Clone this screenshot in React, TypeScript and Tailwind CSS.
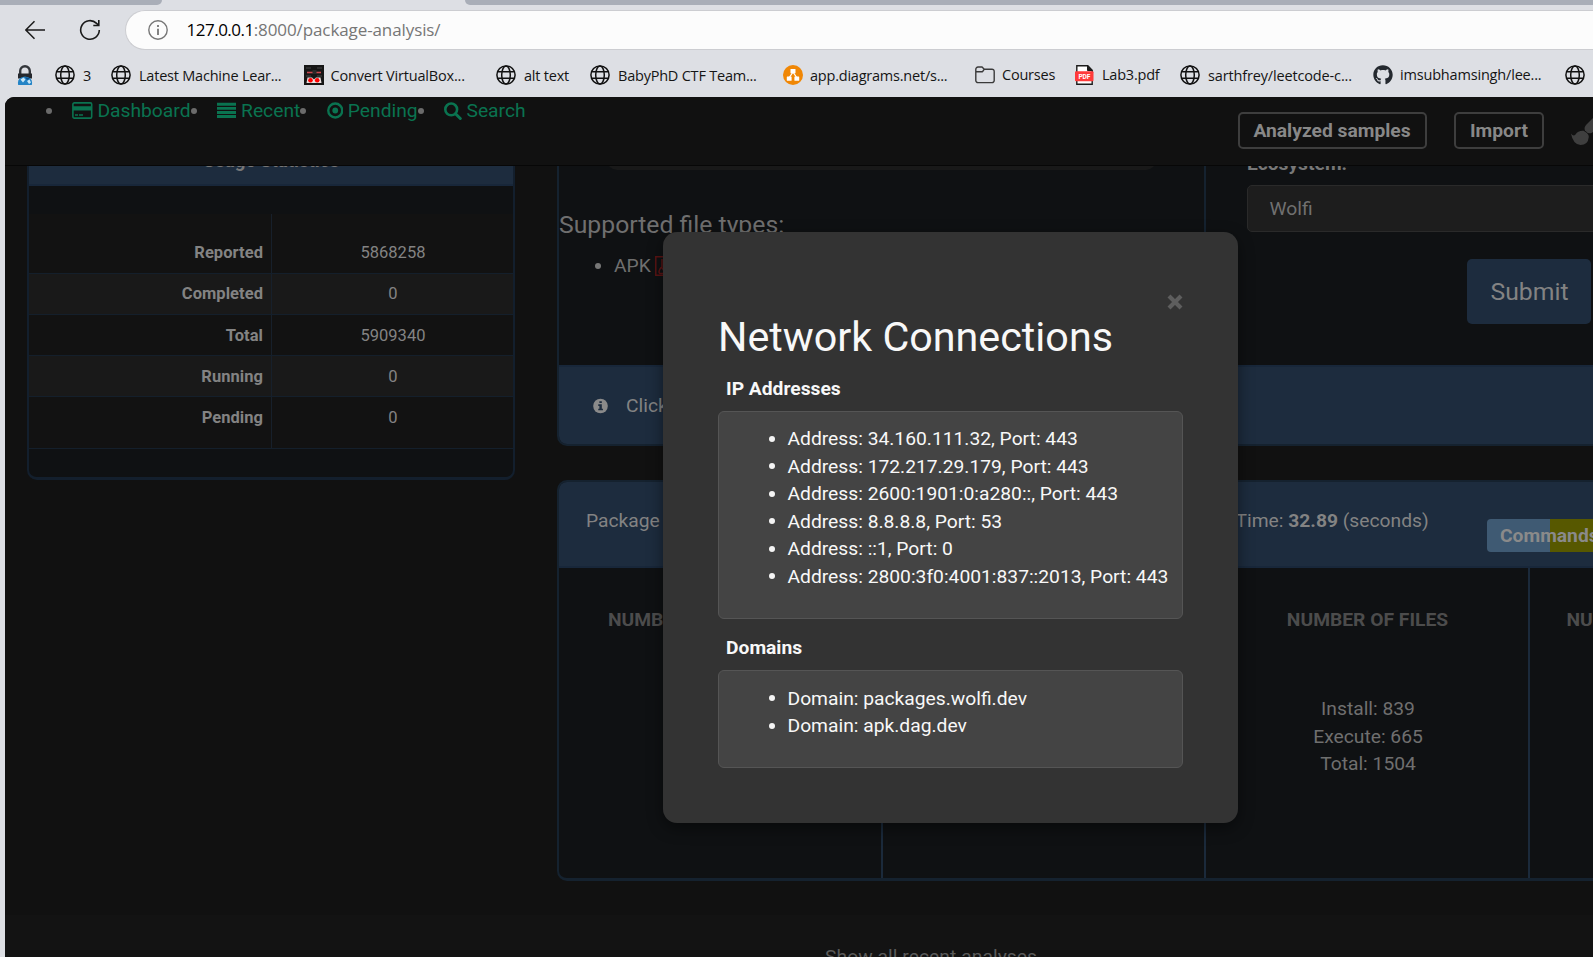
import React from "react";
import { FaGithub } from "react-icons/fa";

function Globe() {
  return (
    <svg width="20" height="20" viewBox="0 0 20 20" fill="none" stroke="#111" strokeWidth="1.5" className="shrink-0">
      <circle cx="10" cy="10" r="9.1" />
      <ellipse cx="10" cy="10" rx="4.3" ry="9.1" />
      <path d="M1.8 6.7H18.2M1.8 13.3H18.2" />
    </svg>
  );
}

function LockGlobe() {
  return (
    <svg width="16" height="20" viewBox="0 0 16 20" className="shrink-0">
      <path d="M3.2 9V6a4.8 4.8 0 0 1 9.6 0v3" fill="none" stroke="#33363b" strokeWidth="2.4" />
      <path d="M1 8.500h14v5H1z" fill="#25282d" />
      <path d="M1.200 20Q-.5 12.500 8 11.500Q16.500 12.500 14.800 20z" fill="#2484c6" />
      <path d="M3.500 14.500l3-2 2 2-2.500 3zM10 16l2.500-1.500 1.500 3-2 1.500z" fill="#c8e6f7" />
      <path d="M8 12l5 1.500-3 1.500z" fill="#0d4f8c" />
    </svg>
  );
}

function RedBox() {
  return (
    <svg width="20" height="20" viewBox="0 0 20 20" className="shrink-0">
      <rect width="20" height="20" fill="#161616" />
      <path d="M2 3h5M13 3h5M2 11h5M13 11h5" stroke="#444" strokeWidth="1" />
      <path d="M3 7.500h14" stroke="#c9474f" strokeWidth="1.600" />
      <rect x="8.500" y="5" width="4" height="4" fill="#2a2a2a" />
      <path d="M3.500 12.500h4.500l2 2 2-2h4.500l1 5.500h-15z" fill="#e8dede" />
      <circle cx="6.500" cy="15.200" r="2.300" fill="#f00" />
      <circle cx="13.200" cy="15.200" r="2.300" fill="#f00" />
    </svg>
  );
}

function Diagrams() {
  return (
    <svg width="20" height="20" viewBox="0 0 20 20" className="shrink-0">
      <circle cx="10" cy="10" r="10" fill="#f08705" />
      <path d="M10 7L6 13M10 7l4 6" stroke="#fff" strokeWidth="1.300" />
      <rect x="7.500" y="4" width="5" height="4.200" rx=".5" fill="#fff" />
      <rect x="3.800" y="11.600" width="4.800" height="4.200" rx=".5" fill="#fff" />
      <rect x="11.400" y="11.600" width="4.800" height="4.200" rx=".5" fill="#fff" />
    </svg>
  );
}

function Folder() {
  return (
    <svg width="20" height="20" viewBox="0 0 20 20" fill="none" stroke="#3a3a3a" strokeWidth="1.400" className="shrink-0">
      <path d="M.8 4.200a2.200 2.200 0 0 1 2.200-2.200h4l2.300 2.200h7.700a2.200 2.200 0 0 1 2.200 2.200v9a2.200 2.200 0 0 1-2.200 2.200H3a2.200 2.200 0 0 1-2.200-2.200zM.8 6.800h5.700q.8 0 1.300-.6l1.500-2" />
    </svg>
  );
}

function Pdf() {
  return (
    <svg width="20" height="20" viewBox="0 0 20 20" className="shrink-0">
      <path d="M1.800 19.200V.8h11l4.400 4.400v14z" fill="#fff" stroke="#1c1c1c" strokeWidth="1.400" />
      <path d="M12.500.8v4.700h4.700" fill="#1c1c1c" stroke="#1c1c1c" />
      <rect y="6.200" width="18.500" height="10" rx="1" fill="#ff3a3a" />
      <text x="9.300" y="13.700" textAnchor="middle" fontSize="6.600" fontWeight="700" fill="#fff" fontFamily="Roboto, sans-serif">PDF</text>
    </svg>
  );
}

const bookmarks: { icon: React.ReactNode; label?: string; w: string; t?: string }[] = [
  { icon: <LockGlobe />, w: "w-[38px]" },
  { icon: <Globe />, label: "3", w: "w-[56px]", t: "pt-px" },
  { icon: <Globe />, label: "Latest Machine Lear...", w: "w-[193px]", t: "pt-px" },
  { icon: <RedBox />, label: "Convert VirtualBox...", w: "w-[192px]", t: "pt-px -ml-[1.500px] tracking-[-0.18px]" },
  { icon: <Globe />, label: "alt text", w: "w-[94px]", t: "pt-px" },
  { icon: <Globe />, label: "BabyPhD CTF Team...", w: "w-[193px]", t: "pt-px" },
  { icon: <Diagrams />, label: "app.diagrams.net/s...", w: "w-[192px]", t: "pt-px -ml-px" },
  { icon: <Folder />, label: "Courses", w: "w-[100px]", t: "-ml-px" },
  { icon: <Pdf />, label: "Lab3.pdf", w: "w-[105px]", t: "-ml-px" },
  { icon: <Globe />, label: "sarthfrey/leetcode-c...", w: "w-[193px]", t: "pt-px tracking-[-0.15px]" },
  { icon: <FaGithub size={20} color="#24292f" className="shrink-0" />, label: "imsubhamsingh/lee...", w: "w-[192px]", t: "-ml-px tracking-[-0.18px]" },
  { icon: <Globe />, w: "w-[28px]" },
];

function Browser() {
  return (
    <div className="h-[97px] shrink-0 bg-[#dddfe4] font-['Open_Sans',sans-serif]">
      <div className="flex h-[5px] justify-between">
        <div className="w-[162px] rounded-br-[5px] bg-[#a9aeb8]" />
        <div className="w-[1128px] rounded-bl-[5px] bg-[#a9aeb8]" />
      </div>
      <div className="flex h-[50px] items-center">
        <svg width="20" height="20" viewBox="0 0 20 20" className="ml-[25px]" fill="none" stroke="#1a1a1a" strokeWidth="1.500">
          <path d="M20 10H.8M9.500 1.200L.8 10l8.700 8.800" />
        </svg>
        <svg width="22" height="22" viewBox="0 0 22 22" className="ml-[34px]" fill="none" stroke="#1a1a1a" strokeWidth="1.600">
          <path d="M20.300 11a9.300 9.300 0 1 1-2.700-6.600L19.500 6M19.800 1v5.500h-5.500" />
        </svg>
        <div className="ml-[24px] flex h-[40px] flex-1 items-center rounded-l-full border border-r-0 border-[#cccdd1] bg-[#fcfcfc] pl-[22px]">
          <svg width="20" height="20" viewBox="0 0 20 20" fill="none" stroke="#767676" strokeWidth="1.400">
            <circle cx="10" cy="10" r="9.200" />
            <path d="M10 8.700v6.300M10 5v2" strokeWidth="1.800" />
          </svg>
          <div className="ml-[18.500px] flex text-[17px] leading-[24px]">
            <span className="tracking-[-0.5px] text-black">127.0.0.1</span>
            <span className="tracking-[-0.1px] text-[#767676]">:8000/package-analysis/</span>
          </div>
        </div>
      </div>
      <div className="flex h-[40px] items-center overflow-hidden pl-[17px]">
        {bookmarks.map((b, i) => (
          <div key={i} className={`${b.w} flex shrink-0 items-center gap-[8px] whitespace-nowrap text-[14.5px] leading-[20px] tracking-[-0.22px] text-[#151515]`}>
            {b.icon}
            {b.label && <span className={b.t}>{b.label}</span>}
          </div>
        ))}
      </div>
    </div>
  );
}

const CardIcon = () => (
  <svg width="20.600" height="17" viewBox="0 0 20.6 17">
    <rect x=".9" y=".9" width="18.800" height="15.200" rx="1.400" fill="none" stroke="currentColor" strokeWidth="1.600" />
    <path d="M1 4.200h18.600v4.200H1zM3 12.200h3v1.600H3zM7 12.200h4v1.600H7z" fill="currentColor" />
  </svg>
);
const BarsIcon = () => (
  <svg width="19.250" height="17" viewBox="0 0 19.25 17" fill="currentColor">
    <path d="M0 .8h19.250v2.900H0zM0 4.900h19.250v2.900H0zM0 9h19.250v2.900H0zM0 13.100h19.250V16H0z" />
  </svg>
);
const DotIcon = () => (
  <svg width="16.500" height="17" viewBox="0 0 16.5 17">
    <circle cx="8.250" cy="8.500" r="7" fill="none" stroke="currentColor" strokeWidth="2.400" />
    <circle cx="8.250" cy="8.500" r="2.900" fill="currentColor" />
  </svg>
);
const SearchIcon = () => (
  <svg width="17.900" height="18" viewBox="0 0 17.9 18" fill="none" stroke="currentColor">
    <circle cx="7.200" cy="7.400" r="5.900" strokeWidth="2.600" />
    <path d="M11.500 11.800l4.800 4.700" strokeWidth="3" strokeLinecap="round" />
  </svg>
);

const nav = [
  { icon: <CardIcon />, label: "Dashboard", w: "w-[145px]", g: "mr-[20px]" },
  { icon: <BarsIcon />, label: "Recent", w: "w-[109px]", g: "mr-[20px]" },
  { icon: <DotIcon />, label: "Pending", w: "w-[118px]", g: "mr-[20.500px]" },
  { icon: <SearchIcon />, label: "Search", w: "w-[120px]", g: "mr-[19.800px]" },
];

function Header() {
  return (
    <header className="relative z-10 flex h-[69px] shrink-0 items-start border-b border-[#070707] bg-[#111]">
      <ul className="flex pl-[41px]">
        {nav.map((n) => (
          <li key={n.label} className={`${n.w} flex h-[27.5px] items-center whitespace-nowrap text-[#0a7350]`}>
            <span className={`${n.g} size-[6px] shrink-0 rounded-full bg-[#6b6b6b]`} />
            <span className="mr-[4.800px] shrink-0">{n.icon}</span>
            <span>{n.label}</span>
          </li>
        ))}
      </ul>
      <div className="ml-auto flex shrink-0 pt-[15px] font-bold text-[#888]">
        <div className="flex h-[37px] w-[189px] items-center justify-center rounded-[5px] border-2 border-[#3e3e3e] pr-px">Analyzed samples</div>
        <div className="ml-[27px] flex h-[37px] w-[90px] items-center justify-center rounded-[5px] border-2 border-[#3e3e3e]">Import</div>
        <svg width="22" height="30" viewBox="0 0 22 30" className="ml-[27px] mt-[6px]" fill="#3f3f3f">
          <path d="M0 15.500Q2.500 19 4.500 16.500Q7 12.500 12.500 12.800Q18 15.500 17.800 19Q17 27 9.500 27Q2 26.500 0 15.500z" />
          <path d="M22 0L15.500 6.500Q12.500 9.500 14 12.500Q17 16.300 20.500 15L22 14z" />
        </svg>
      </div>
    </header>
  );
}

const stats = [
  { k: "Reported", v: "5868258", c: "h-[59.500px] pt-[18px]" },
  { k: "Completed", v: "0", c: "h-[41.200px] bg-[#191919]" },
  { k: "Total", v: "5909340", c: "h-[41.200px] pt-[1.500px]" },
  { k: "Running", v: "0", c: "h-[41.200px] pt-[1.500px] bg-[#191919]" },
  { k: "Pending", v: "0", c: "h-[51.900px] pb-[9px]" },
];

function Stats() {
  return (
    <section className="h-[314px] w-[488px] shrink-0 rounded-b-[10px] border-x-2 border-b-[3px] border-[#131f2d] bg-[#0f1113]">
      <div className="flow-root h-[20px] border-b-2 border-[#18273a] bg-[#1d2c3e] text-center">
        <div className="-mt-[15px] text-[18.600px] font-bold leading-[20px] text-[#777]">Usage Statistics</div>
      </div>
      <div className="mt-[28px] bg-[#121212] text-[16.500px] text-[#838383]">
        {stats.map((s) => (
          <div key={s.k} className={`${s.c} relative flex items-center border-b border-[#141f2b]`}>
            <div className="w-[242px] pr-[8px] text-right font-bold tracking-[0.05px]">{s.k}</div>
            <div className="flex-1 pl-[2px] text-center">{s.v}</div>
            <div className="absolute inset-y-0 left-[242px] w-px bg-[#17202b]" />
          </div>
        ))}
      </div>
    </section>
  );
}

function Main() {
  return (
    <div className="ml-[42px] w-[1300px] shrink-0">
      <section className="h-[280px] rounded-bl-[10px] border-b-2 border-l-2 border-[#15222f] bg-[#0f1113]">
        <div className="flex h-[199px]">
          <div className="w-[647px] shrink-0 border-r-2 border-[#15222f]">
            <div className="-mt-[16px] ml-[48px] h-[20px] w-[549px] rounded-b-[10px] bg-[#191919]" />
            <div className="mt-[37px] text-[24.750px] leading-[36px] text-[#6f6f6f]">Supported file types:</div>
            <div className="mt-[9px] flex h-[27.500px] items-center pl-[36px] text-[#6f6f6f]">
              <span className="size-[6px] rounded-full bg-[#777]" />
              <span className="ml-[13px]">APK</span>
              <svg width="17" height="20" viewBox="0 0 17 20" fill="none" stroke="#5c1414" strokeWidth="1.500" className="ml-[4px]">
                <path d="M.8.800H11l5 5V19.200H.8z" />
                <path d="M7 3v8M5 17.500q-2-1 0-4.500l1.500-2 2 3q1 3-1 3.500z" />
              </svg>
            </div>
          </div>
          <div className="pl-[41px]">
            <div className="-mt-[16px] font-bold leading-[27.500px] text-[#777]">Ecosystem:</div>
            <div className="mt-[7.500px] flex h-[47px] w-[500px] items-center rounded-[5px] border border-[#2a2a2a] bg-[#1d1d1d] pl-[21.500px] text-[#707070]">Wolfi</div>
            <div className="ml-[220px] mt-[27px] flex h-[65px] w-[124px] items-center justify-center rounded-[5px] bg-[#1d2c3e] pl-px text-[24.750px] text-[#838383]">Submit</div>
          </div>
        </div>
        <div className="flex h-[79px] items-center rounded-bl-[8px] border-t-2 border-[#18273a] bg-[#1d2c3e] pl-[34px] text-[#838383]">
          <svg width="15" height="16" viewBox="0 0 16 16">
            <circle cx="8" cy="8" r="7.800" fill="#8a8a8a" />
            <path d="M6.800 2.800h2.600v2.100H6.800zM5.600 6.200h3.800v4.600h1.200v1.800H5.600v-1.800h1.200V7.900H5.600z" fill="#1d2c3e" />
          </svg>
          <span className="ml-[18px]">Click</span>
        </div>
      </section>

      <section className="mt-[34px] h-[401px] rounded-l-[10px] border-b-[3px] border-l-2 border-t-2 border-[#15222f] bg-[#0f1113]">
        <div className="flex h-[86px] rounded-tl-[8px] border-b-2 border-[#18273a] bg-[#1d2c3e] text-[#838383]">
          <div className="w-[676.500px] pl-[27px] pt-[25px]">Package</div>
          <div className="w-[251.500px] whitespace-nowrap pt-[25px]">
            Time: <b>32.89</b> (seconds)
          </div>
          <div className="mt-[37px] flex h-[33px] w-[200px] items-center rounded-[4px] bg-linear-to-r from-[#3f5a73] from-[63px] to-[#575800] to-[63px] pl-[13px] font-bold text-[#8a8a8a]">
            Commands
          </div>
        </div>
        <div className="flex h-[310px] text-center">
          <div className="w-[322px] shrink-0 pl-[49px] pt-[38px] text-left font-bold text-[#4c4c4c]">NUMBER</div>
          <div className="w-[325px] shrink-0 border-x-2 border-[#1b2a3b]" />
          <div className="w-[324px] shrink-0 border-r-2 border-[#1b2a3b] pl-px pt-[38px]">
            <div className="font-bold text-[#4c4c4c]">NUMBER OF FILES</div>
            <div className="mt-[61.500px] pl-px text-[#6f6f6f]">
              <div>Install: 839</div>
              <div>Execute: 665</div>
              <div>Total: 1504</div>
            </div>
          </div>
          <div className="pl-[36.500px] pt-[38px] font-bold text-[#4c4c4c]">NUMBER</div>
        </div>
      </section>
    </div>
  );
}

const ips = [
  "Address: 34.160.111.32, Port: 443",
  "Address: 172.217.29.179, Port: 443",
  "Address: 2600:1901:0:a280::, Port: 443",
  "Address: 8.8.8.8, Port: 53",
  "Address: ::1, Port: 0",
  "Address: 2800:3f0:4001:837::2013, Port: 443",
];
const domains = ["Domain: packages.wolfi.dev", "Domain: apk.dag.dev"];

function Box({ title, items, cls }: { title: string; items: string[]; cls: string }) {
  return (
    <div>
      <div className="pl-[8px] font-bold leading-[27.500px]">{title}</div>
      <ul className={`${cls} mt-[8.500px] rounded-[6px] border border-[#555] bg-[#444] pl-[50px] pt-[13.500px]`}>
        {items.map((t) => (
          <li key={t} className="flex items-center whitespace-nowrap leading-[27.500px]">
            <span className="mr-[12.500px] size-[6px] rounded-full bg-[#f4f4f4]" />
            {t}
          </li>
        ))}
      </ul>
    </div>
  );
}

function Modal() {
  return (
    <div className="absolute left-[663px] top-[232px] z-20 h-[591px] w-[575px] rounded-[14px] bg-[#333] px-[55px] font-['Roboto',sans-serif] text-[19.250px] text-[#f8f8f8] shadow-[0_5px_16px_rgba(0,0,0,0.45)]">
      <div className="flex h-[84px] items-end justify-end pr-[0.500px]">
        <svg width="16" height="16" viewBox="0 0 16 16" stroke="#5e5e5e" strokeWidth="4.200" className="mb-[6.500px]">
          <path d="M2 2l12 12M14 2L2 14" />
        </svg>
      </div>
      <h1 className="h-[58.500px] text-[41.250px] leading-[43px]">Network Connections</h1>
      <Box title="IP Addresses" items={ips} cls="h-[208px]" />
      <div className="h-[15.500px]" />
      <Box title="Domains" items={domains} cls="h-[98px]" />
    </div>
  );
}

export default function App() {
  return (
    <div className="relative flex h-[957px] w-[1593px] flex-col overflow-hidden bg-[#dddfe4]">
      <Browser />
      <div className="ml-[5px] flex min-h-0 flex-1 flex-col overflow-hidden rounded-tl-[9px] bg-[#111] font-['Roboto',sans-serif] text-[19.250px] leading-[27.500px]">
        <Header />
        <div className="flex h-[749px] shrink-0 items-start pl-[22px]">
          <Stats />
          <Main />
        </div>
        <footer className="h-[42px] shrink-0 bg-[#131313] pl-[820px] pt-[27.500px] tracking-[0.05px] text-[#5a5a5a]">Show all recent analyses</footer>
      </div>
      <Modal />
    </div>
  );
}
